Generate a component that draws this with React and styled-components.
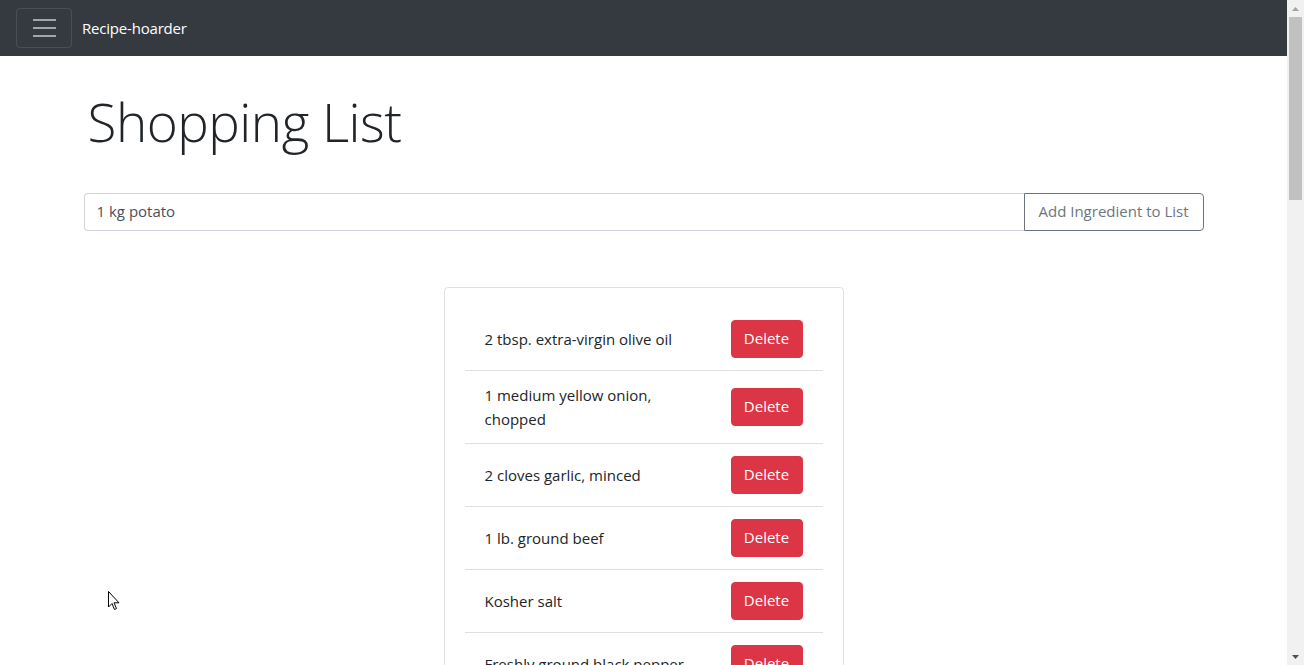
import React, { useState } from 'react';
import styled, { createGlobalStyle } from 'styled-components';

const GlobalStyle = createGlobalStyle`
  html, body {
    margin: 0;
    height: 665px;
    overflow: hidden;
  }
  body {
    font-family: "Segoe UI", "Open Sans", "Noto Sans", sans-serif;
    font-size: 16px;
    line-height: 1.5;
    color: #212529;
    background: #fff;
  }
  * {
    box-sizing: border-box;
  }
`;

const Frame = styled.div`
  display: flex;
  height: 665px;
  position: relative;
`;

const Page = styled.div`
  flex: 1;
  min-width: 0;
  overflow: hidden;
`;

const Navbar = styled.nav`
  display: flex;
  align-items: center;
  height: 56px;
  padding: 0 16px;
  background-color: #343a40;
`;

const Toggler = styled.button`
  width: 56px;
  height: 40px;
  padding: 0;
  display: flex;
  flex-direction: column;
  align-items: center;
  justify-content: center;
  gap: 6px;
  background: transparent;
  border: 1px solid rgba(255, 255, 255, 0.1);
  border-radius: 4px;
  cursor: pointer;

  span {
    display: block;
    width: 23px;
    height: 2px;
    background: rgba(255, 255, 255, 0.55);
  }
`;

const Brand = styled.a`
  margin-left: 10px;
  color: #fff;
  font-size: 15px;
  letter-spacing: -0.2px;
  text-decoration: none;
`;

const Container = styled.main`
  width: 1120px;
  margin: 0 auto;
`;

const Title = styled.h1`
  margin: 34px 0 39px;
  font-size: 53px;
  font-weight: 300;
  line-height: 1.2;
  letter-spacing: -0.5px;
  padding-left: 4px;
`;

const InputGroup = styled.div`
  display: flex;
  height: 38px;
`;

const TextInput = styled.input`
  flex: 1;
  min-width: 0;
  padding: 6px 12px;
  font: inherit;
  font-size: 15px;
  color: #495057;
  border: 1px solid #ced4da;
  border-right: none;
  border-radius: 4px 0 0 4px;
  outline: none;
`;

const OutlineButton = styled.button`
  width: 180px;
  padding: 6px 12px;
  font: inherit;
  font-size: 15px;
  color: #6c757d;
  background: transparent;
  border: 1px solid #6c757d;
  border-radius: 0 4px 4px 0;
  cursor: pointer;
`;

const Card = styled.section`
  width: 400px;
  margin: 56px auto 0;
  padding: 20px;
  border: 1px solid rgba(0, 0, 0, 0.125);
  border-radius: 4px;
`;

const List = styled.ul`
  list-style: none;
  margin: 0;
  padding: 0;
`;

const Item = styled.li`
  display: flex;
  align-items: center;
  justify-content: space-between;
  padding: 12px 20px;
  border-bottom: 1px solid rgba(0, 0, 0, 0.125);
`;

const ItemText = styled.span`
  width: 214px;
  font-size: 15px;
  line-height: 24px;
`;

const DeleteButton = styled.button`
  width: 72px;
  height: 38px;
  padding: 0;
  font: inherit;
  font-size: 15px;
  color: #fff;
  background-color: #dc3545;
  border: 1px solid #dc3545;
  border-radius: 4px;
  cursor: pointer;
`;

const Scrollbar = styled.div`
  width: 17px;
  flex-shrink: 0;
  display: flex;
  flex-direction: column;
  align-items: center;
  background: #f1f1f1;
`;

const ArrowCell = styled.div`
  height: 17px;
  width: 17px;
  display: flex;
  align-items: center;
  justify-content: center;
`;

const Thumb = styled.div`
  width: 13px;
  height: 183px;
  background: #c1c1c1;
`;

const Spacer = styled.div`
  flex: 1;
`;

const Cursor = styled.svg`
  position: absolute;
  left: 108px;
  top: 591px;
  pointer-events: none;
`;

const initialItems = [
  '2 tbsp. extra-virgin olive oil',
  '1 medium yellow onion, chopped',
  '2 cloves garlic, minced',
  '1 lb. ground beef',
  'Kosher salt',
  'Freshly ground black pepper',
];

const App = () => {
  const [items, setItems] = useState(initialItems);
  const [draft, setDraft] = useState('1 kg potato');

  const addItem = () => {
    if (!draft.trim()) return;
    setItems(prev => [...prev, draft.trim()]);
    setDraft('');
  };

  const removeItem = (index) => {
    setItems(prev => prev.filter((_, i) => i !== index));
  };

  return (
    <>
      <GlobalStyle />
      <Frame>
        <Page>
          <Navbar>
            <Toggler aria-label="Toggle navigation">
              <span />
              <span />
              <span />
            </Toggler>
            <Brand href="#">Recipe-hoarder</Brand>
          </Navbar>
          <Container>
            <Title>Shopping List</Title>
            <InputGroup>
              <TextInput value={draft} onChange={e => setDraft(e.target.value)} />
              <OutlineButton onClick={addItem}>Add Ingredient to List</OutlineButton>
            </InputGroup>
            <Card>
              <List>
                {items.map((item, i) => (
                  <Item key={item + i}>
                    <ItemText>{item}</ItemText>
                    <DeleteButton onClick={() => removeItem(i)}>Delete</DeleteButton>
                  </Item>
                ))}
              </List>
            </Card>
          </Container>
        </Page>
        <Scrollbar>
          <ArrowCell>
            <svg width="7" height="4" viewBox="0 0 7 4"><path d="M0 4 L3.5 0 L7 4 Z" fill="#a3a3a3" /></svg>
          </ArrowCell>
          <Thumb />
          <Spacer />
          <ArrowCell>
            <svg width="7" height="4" viewBox="0 0 7 4"><path d="M0 0 L7 0 L3.5 4 Z" fill="#505050" /></svg>
          </ArrowCell>
        </Scrollbar>
        <Cursor width="12" height="20" viewBox="0 0 12 20">
          <path d="M0.5 0.5 L0.5 16 L4 12.5 L6.5 18.5 L8.5 17.6 L6 11.8 L11 11.8 Z" fill="#fff" stroke="#000" strokeWidth="1" strokeLinejoin="round" />
        </Cursor>
      </Frame>
    </>
  );
};

export default App;
